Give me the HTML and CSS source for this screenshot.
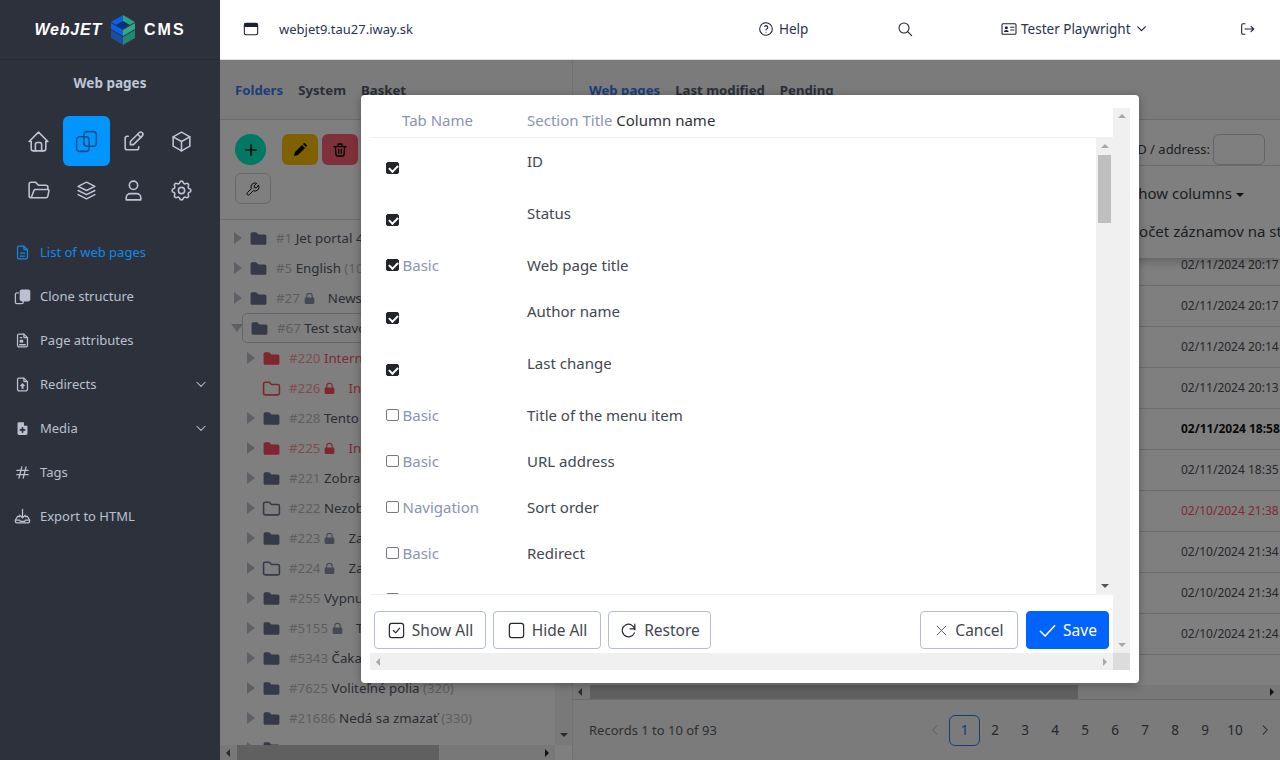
FILE: index.html
```html
<!DOCTYPE html>
<html lang="en">
<head>
    <meta charset="UTF-8">
    <title>WebJET CMS - Web pages</title>
    <link rel="stylesheet" href="styles.css">
</head>
<body>

<svg class="icon-defs" xmlns="http://www.w3.org/2000/svg">
    <symbol id="i-home" viewBox="0 0 24 24"><path d="M5 12H3l9-9 9 9h-2"/><path d="M5 12v7a2 2 0 0 0 2 2h10a2 2 0 0 0 2-2v-7"/><path d="M9 21v-6a2 2 0 0 1 2-2h2a2 2 0 0 1 2 2v6"/></symbol>
    <symbol id="i-copy" viewBox="0 0 24 24"><rect x="2.5" y="7.5" width="12" height="14" rx="3"/><rect x="9.5" y="2.5" width="12" height="14" rx="3"/></symbol>
    <symbol id="i-edit" viewBox="0 0 24 24"><path d="M7 7H6a2 2 0 0 0-2 2v9a2 2 0 0 0 2 2h9a2 2 0 0 0 2-2v-1"/><path d="M20.4 6.6a2.1 2.1 0 0 0-3-3L9 12v3h3z"/><path d="M16 5l3 3"/></symbol>
    <symbol id="i-box" viewBox="0 0 24 24"><path d="M12 3l8 4.5v9L12 21l-8-4.5v-9z"/><path d="M12 12l8-4.5M12 12v9M12 12L4 7.500"/></symbol>
    <symbol id="i-folder-open" viewBox="0 0 24 24"><path d="M5 19l2.800-7.400a1 1 0 0 1 .9-.6H21a1 1 0 0 1 1 1.200l-1 5.200a2 2 0 0 1-2 1.600H5a2 2 0 0 1-2-2V6a2 2 0 0 1 2-2h4l3 3h7a2 2 0 0 1 2 2v2"/></symbol>
    <symbol id="i-stack" viewBox="0 0 24 24"><path d="M12 4L4 8l8 4 8-4z"/><path d="M4 12l8 4 8-4"/><path d="M4 16l8 4 8-4"/></symbol>
    <symbol id="i-user" viewBox="0 0 24 24"><circle cx="12" cy="7" r="4"/><path d="M5 21v-2a4 4 0 0 1 4-4h6a4 4 0 0 1 4 4v2z"/></symbol>
    <symbol id="i-gear" viewBox="0 0 24 24"><path d="M10.325 4.317c.426-1.756 2.924-1.756 3.35 0a1.724 1.724 0 0 0 2.573 1.066c1.543-.94 3.31.826 2.37 2.37a1.724 1.724 0 0 0 1.065 2.572c1.756.426 1.756 2.924 0 3.350a1.724 1.724 0 0 0-1.066 2.573c.94 1.543-.826 3.310-2.370 2.370a1.724 1.724 0 0 0-2.572 1.065c-.426 1.756-2.924 1.756-3.350 0a1.724 1.724 0 0 0-2.573-1.066c-1.543.94-3.310-.826-2.370-2.370a1.724 1.724 0 0 0-1.065-2.572c-1.756-.426-1.756-2.924 0-3.350a1.724 1.724 0 0 0 1.066-2.573c-.94-1.543.826-3.310 2.370-2.370c1 .608 2.296.07 2.572-1.065z"/><circle cx="12" cy="12" r="3"/></symbol>
    <symbol id="i-file-text" viewBox="0 0 24 24"><path d="M14 3v4a1 1 0 0 0 1 1h4"/><path d="M17 21H7a2 2 0 0 1-2-2V5a2 2 0 0 1 2-2h7l5 5v11a2 2 0 0 1-2 2z"/><path d="M9 13h6M9 17h6"/></symbol>
    <symbol id="i-clone" viewBox="0 0 24 24"><rect class="solid" x="8" y="2" width="15" height="17" rx="3"/><path d="M6 7H4a2 2 0 0 0-2 2v11a2 2 0 0 0 2 2h7a2 2 0 0 0 2-2v-1"/></symbol>
    <symbol id="i-file-attr" viewBox="0 0 24 24"><path d="M14 3v4a1 1 0 0 0 1 1h4"/><path d="M17 21H7a2 2 0 0 1-2-2V5a2 2 0 0 1 2-2h7l5 5v11a2 2 0 0 1-2 2z"/><path class="solid" d="M8 11h5v4H8z"/><path d="M9 8h2M8 18h8"/></symbol>
    <symbol id="i-file-up" viewBox="0 0 24 24"><path d="M14 3v4a1 1 0 0 0 1 1h4"/><path d="M17 21H7a2 2 0 0 1-2-2V5a2 2 0 0 1 2-2h7l5 5v11a2 2 0 0 1-2 2z"/><path class="solid" d="M12 10l4 4h-2.500v4h-3v-4H8z"/></symbol>
    <symbol id="i-file-plus" viewBox="0 0 24 24"><path class="solid" d="M17 21H7a2 2 0 0 1-2-2V5a2 2 0 0 1 2-2h7v4a1 1 0 0 0 1 1h4v11a2 2 0 0 1-2 2z"/><path class="cut" d="M12 11v6M9 14h6"/></symbol>
    <symbol id="i-hash" viewBox="0 0 24 24"><path d="M4 9h16M4 15h16M11 4L7 20M17 4l-4 16"/></symbol>
    <symbol id="i-export" viewBox="0 0 24 24"><path d="M12 2v12M8 10l4 4 4-4"/><path d="M8 12H5l-3 5v2a2 2 0 0 0 2 2h16a2 2 0 0 0 2-2v-2l-3-5h-3"/><path d="M2 17h6l1 2h6l1-2h6"/></symbol>
    <symbol id="i-chevron" viewBox="0 0 24 24"><path d="M5 9l7 7 7-7"/></symbol>
    <symbol id="i-window" viewBox="0 0 24 24"><rect x="2" y="3.500" width="20" height="17" rx="2.500"/><path class="solid" d="M2 5a2 2 0 0 1 2-2h16a2 2 0 0 1 2 2v4H2z"/></symbol>
    <symbol id="i-help" viewBox="0 0 24 24"><circle cx="12" cy="12" r="9.500"/><path d="M12 17v.01M12 13.500a1.500 1.500 0 0 1 1-1.500 2.600 2.600 0 1 0-3-4"/></symbol>
    <symbol id="i-search" viewBox="0 0 24 24"><circle cx="10.500" cy="10.500" r="7.500"/><path d="M16 16l6 6"/></symbol>
    <symbol id="i-idcard" viewBox="0 0 24 24"><rect x="1.500" y="4" width="21" height="16" rx="1.500"/><circle class="solid" cx="8" cy="10" r="2.300"/><path class="solid" d="M4.500 16.500a3.500 3 0 0 1 7 0z"/><path d="M14.500 9.500h5M14.500 13.500h5"/></symbol>
    <symbol id="i-logout" viewBox="0 0 24 24"><path d="M9 4H6a2 2 0 0 0-2 2v12a2 2 0 0 0 2 2h3"/><path d="M9 12h13M18 8l4 4-4 4"/></symbol>
    <symbol id="i-plus" viewBox="0 0 24 24"><path d="M12 4v16M4 12h16"/></symbol>
    <symbol id="i-pencil" viewBox="0 0 24 24"><path class="solid" d="M3 21l1.500-6L15 4.500l4.500 4.500L9 19.500zM16.500 3l1-1a1.500 1.500 0 0 1 2 0l2.500 2.500a1.500 1.500 0 0 1 0 2l-1 1z"/></symbol>
    <symbol id="i-trash" viewBox="0 0 24 24"><path d="M3 7h18M10 11v6M14 11v6M5 7l1 12a2 2 0 0 0 2 2h8a2 2 0 0 0 2-2l1-12M9 7V4a1 1 0 0 1 1-1h4a1 1 0 0 1 1 1v3"/></symbol>
    <symbol id="i-tool" viewBox="0 0 24 24"><path d="M17 10h-3V7l3.500-3.500a6 6 0 0 0-8 8l-6 6a2 2 0 0 0 3 3l6-6a6 6 0 0 0 8-8z"/></symbol>
    <symbol id="i-folder" viewBox="0 0 24 24"><path class="solid" d="M2 6a2 2 0 0 1 2-2h5l3 3h8a2 2 0 0 1 2 2v9a2 2 0 0 1-2 2H4a2 2 0 0 1-2-2z"/></symbol>
    <symbol id="i-folder-line" viewBox="0 0 24 24"><path d="M2 6a2 2 0 0 1 2-2h5l3 3h8a2 2 0 0 1 2 2v9a2 2 0 0 1-2 2H4a2 2 0 0 1-2-2z"/></symbol>
    <symbol id="i-lock" viewBox="0 0 24 24"><path d="M7 11V7.500a5 5 0 0 1 10 0V11"/><rect class="solid" x="3" y="10" width="18" height="12" rx="2.500"/></symbol>
    <symbol id="i-check-square" viewBox="0 0 24 24"><rect x="3" y="3" width="18" height="18" rx="3"/><path d="M8 12l3 3 5-6"/></symbol>
    <symbol id="i-square" viewBox="0 0 24 24"><rect x="3" y="3" width="18" height="18" rx="3"/></symbol>
    <symbol id="i-restore" viewBox="0 0 24 24"><path d="M20 11a8 8 0 1 0-.500 4"/><path d="M20 4v6h-6"/></symbol>
    <symbol id="i-x" viewBox="0 0 24 24"><path d="M5 5l14 14M19 5L5 19"/></symbol>
    <symbol id="i-check" viewBox="0 0 24 24"><path d="M3 13l6 6L21 6"/></symbol>
    <symbol id="i-left" viewBox="0 0 24 24"><path d="M15 5l-7 7 7 7"/></symbol>
    <symbol id="i-right" viewBox="0 0 24 24"><path d="M9 5l7 7-7 7"/></symbol>
</svg>

<div class="app">
    <aside class="sidebar">
        <div class="logo">
            <span class="logo-web">WebJET</span>
            <svg class="logo-cube" viewBox="0 0 26 30" xmlns="http://www.w3.org/2000/svg">
                <polygon points="13,0 25,7 13,14" fill="#2aa37f"/>
                <polygon points="13,0 1,7 13,14" fill="#0b5fe6"/>
                <polygon points="13,6 20,10 13,14 6,10" fill="#0d2f73"/>
                <polygon points="1,8 13,15 13,21 1,14" fill="#0b5fe6"/>
                <polygon points="25,8 13,15 13,21 25,14" fill="#2fa98a"/>
                <polygon points="1,15 13,22 13,30 1,23" fill="#1a4f9c"/>
                <polygon points="25,15 13,22 13,30 25,23" fill="#27866f"/>
            </svg>
            <span class="logo-cms">CMS</span>
        </div>
        <div class="side-title">Web pages</div>
        <div class="side-grid">
            <a class="side-tile"><svg class="ico"><use href="#i-home"/></svg></a>
            <a class="side-tile active"><svg class="ico"><use href="#i-copy"/></svg></a>
            <a class="side-tile"><svg class="ico"><use href="#i-edit"/></svg></a>
            <a class="side-tile"><svg class="ico"><use href="#i-box"/></svg></a>
            <a class="side-tile"><svg class="ico"><use href="#i-folder-open"/></svg></a>
            <a class="side-tile"><svg class="ico"><use href="#i-stack"/></svg></a>
            <a class="side-tile"><svg class="ico"><use href="#i-user"/></svg></a>
            <a class="side-tile"><svg class="ico"><use href="#i-gear"/></svg></a>
        </div>
        <nav class="side-nav">
            <a class="nav-item active"><svg class="ico"><use href="#i-file-text"/></svg>List of web pages</a>
            <a class="nav-item"><svg class="ico"><use href="#i-clone"/></svg>Clone structure</a>
            <a class="nav-item"><svg class="ico"><use href="#i-file-attr"/></svg>Page attributes</a>
            <a class="nav-item"><svg class="ico"><use href="#i-file-up"/></svg>Redirects<svg class="ico nav-caret"><use href="#i-chevron"/></svg></a>
            <a class="nav-item"><svg class="ico"><use href="#i-file-plus"/></svg>Media<svg class="ico nav-caret"><use href="#i-chevron"/></svg></a>
            <a class="nav-item"><svg class="ico"><use href="#i-hash"/></svg>Tags</a>
            <a class="nav-item"><svg class="ico"><use href="#i-export"/></svg>Export to HTML</a>
        </nav>
    </aside>

    <div class="main">
        <header class="topbar">
            <svg class="ico top-window"><use href="#i-window"/></svg>
            <span class="top-domain">webjet9.tau27.iway.sk</span>
            <span class="top-help"><svg class="ico"><use href="#i-help"/></svg>Help</span>
            <svg class="ico top-search"><use href="#i-search"/></svg>
            <span class="top-user"><svg class="ico"><use href="#i-idcard"/></svg>Tester Playwright<svg class="ico top-caret"><use href="#i-chevron"/></svg></span>
            <svg class="ico top-logout"><use href="#i-logout"/></svg>
        </header>

        <div class="workspace">
            <section class="left-panel">
                <div class="tabs">
                    <a class="tab active">Folders</a>
                    <a class="tab">System</a>
                    <a class="tab">Basket</a>
                </div>
                <div class="tree-toolbar">
                    <button class="btn-round"><svg class="ico"><use href="#i-plus"/></svg></button>
                    <button class="btn-tool btn-yellow"><svg class="ico"><use href="#i-pencil"/></svg></button>
                    <button class="btn-tool btn-red"><svg class="ico"><use href="#i-trash"/></svg></button>
                    <button class="btn-tool btn-plain"><svg class="ico"><use href="#i-tool"/></svg></button>
                </div>
                <div class="tree-wrap">
                    <ul class="tree">
                        <li class="node"><i class="arrow"></i><svg class="ico fld"><use href="#i-folder"/></svg><span class="num">#1</span> Jet portal 4 <span class="num">(0)</span></li>
                        <li class="node"><i class="arrow"></i><svg class="ico fld"><use href="#i-folder"/></svg><span class="num">#5</span> English <span class="num">(10)</span></li>
                        <li class="node"><i class="arrow"></i><svg class="ico fld"><use href="#i-folder"/></svg><span class="num">#27</span><svg class="ico lock"><use href="#i-lock"/></svg>Newsletter</li>
                        <li class="node open selected"><i class="arrow"></i><svg class="ico fld"><use href="#i-folder"/></svg><span class="num">#67</span> Test stavov</li>
                        <li class="node sub red"><i class="arrow"></i><svg class="ico fld"><use href="#i-folder"/></svg><span class="num">#220</span> Interny</li>
                        <li class="node sub red"><i class="arrow none"></i><svg class="ico fld"><use href="#i-folder-line"/></svg><span class="num">#226</span><svg class="ico lock"><use href="#i-lock"/></svg>Interny</li>
                        <li class="node sub"><i class="arrow"></i><svg class="ico fld"><use href="#i-folder"/></svg><span class="num">#228</span> Tento</li>
                        <li class="node sub red"><i class="arrow"></i><svg class="ico fld"><use href="#i-folder"/></svg><span class="num">#225</span><svg class="ico lock"><use href="#i-lock"/></svg>Interny</li>
                        <li class="node sub"><i class="arrow"></i><svg class="ico fld"><use href="#i-folder"/></svg><span class="num">#221</span> Zobrazit</li>
                        <li class="node sub"><i class="arrow"></i><svg class="ico fld"><use href="#i-folder-line"/></svg><span class="num">#222</span> Nezobrazit</li>
                        <li class="node sub"><i class="arrow"></i><svg class="ico fld"><use href="#i-folder"/></svg><span class="num">#223</span><svg class="ico lock"><use href="#i-lock"/></svg>Zaheslovany</li>
                        <li class="node sub"><i class="arrow"></i><svg class="ico fld"><use href="#i-folder-line"/></svg><span class="num">#224</span><svg class="ico lock"><use href="#i-lock"/></svg>Zaheslovany</li>
                        <li class="node sub"><i class="arrow"></i><svg class="ico fld"><use href="#i-folder"/></svg><span class="num">#255</span> Vypnute</li>
                        <li class="node sub"><i class="arrow"></i><svg class="ico fld"><use href="#i-folder"/></svg><span class="num">#5155</span><svg class="ico lock"><use href="#i-lock"/></svg>Test</li>
                        <li class="node sub"><i class="arrow"></i><svg class="ico fld"><use href="#i-folder"/></svg><span class="num">#5343</span> Čaka</li>
                        <li class="node sub"><i class="arrow"></i><svg class="ico fld"><use href="#i-folder"/></svg><span class="num">#7625</span> Voliteľné polia <span class="num">(320)</span></li>
                        <li class="node sub"><i class="arrow"></i><svg class="ico fld"><use href="#i-folder"/></svg><span class="num">#21686</span> Nedá sa zmazať <span class="num">(330)</span></li>
                        <li class="node sub"><i class="arrow"></i><svg class="ico fld"><use href="#i-folder"/></svg></li>
                    </ul>
                    <div class="vbar tree-vbar"><i class="sb-up dark"></i><i class="sb-down dark"></i></div>
                </div>
                <div class="hbar tree-hbar"><i class="sb-left dark"></i><span class="tree-thumb"></span><i class="sb-right dark"></i></div>
            </section>

            <section class="right-panel">
                <div class="tabs right-tabs">
                    <a class="tab active">Web pages</a>
                    <a class="tab">Last modified</a>
                    <a class="tab">Pending</a>
                </div>
                <div class="table-toolbar">
                    <label class="id-label">ID / address:</label>
                    <input class="id-input" type="text">
                </div>
                <div class="table-area">
                    <div class="settings-menu">
                        <div class="menu-line">Show columns <i class="menu-caret"></i></div>
                        <div class="menu-line">Počet záznamov na stranu</div>
                    </div>
                    <div class="row">02/11/2024 20:17</div>
                    <div class="row">02/11/2024 20:17</div>
                    <div class="row">02/11/2024 20:14</div>
                    <div class="row">02/11/2024 20:13</div>
                    <div class="row bold">02/11/2024 18:58</div>
                    <div class="row">02/11/2024 18:35</div>
                    <div class="row red">02/10/2024 21:38</div>
                    <div class="row">02/10/2024 21:34</div>
                    <div class="row">02/10/2024 21:34</div>
                    <div class="row">02/10/2024 21:24</div>
                </div>
                <div class="hbar table-hbar"><i class="sb-left dark"></i><span class="table-thumb"></span><i class="sb-right dark"></i></div>
                <div class="table-footer">
                    <span class="records">Records 1 to 10 of 93</span>
                    <div class="pager">
                        <a class="page off"><svg class="ico"><use href="#i-left"/></svg></a>
                        <a class="page current">1</a>
                        <a class="page">2</a>
                        <a class="page">3</a>
                        <a class="page">4</a>
                        <a class="page">5</a>
                        <a class="page">6</a>
                        <a class="page">7</a>
                        <a class="page">8</a>
                        <a class="page">9</a>
                        <a class="page">10</a>
                        <a class="page"><svg class="ico"><use href="#i-right"/></svg></a>
                    </div>
                </div>
            </section>

            <!-- modal backdrop covers only the workspace, header and sidebar stay bright -->
            <div class="backdrop">
                <div class="modal">
                    <div class="modal-frame">
                        <div class="modal-content">
                            <div class="col-head">
                                <span class="head-tab">Tab Name</span>
                                <span class="head-name"><span class="head-section">Section Title</span> Column name</span>
                            </div>
                            <div class="col-body">
                                <div class="col-list">
                                    <div class="col-row no-tab"><div class="col-tab"><span class="cb on"></span></div><div class="col-name">ID</div></div>
                                    <div class="col-row no-tab"><div class="col-tab"><span class="cb on"></span></div><div class="col-name">Status</div></div>
                                    <div class="col-row"><div class="col-tab"><span class="cb on"></span>Basic</div><div class="col-name">Web page title</div></div>
                                    <div class="col-row no-tab"><div class="col-tab"><span class="cb on"></span></div><div class="col-name">Author name</div></div>
                                    <div class="col-row no-tab"><div class="col-tab"><span class="cb on"></span></div><div class="col-name">Last change</div></div>
                                    <div class="col-row"><div class="col-tab"><span class="cb"></span>Basic</div><div class="col-name">Title of the menu item</div></div>
                                    <div class="col-row"><div class="col-tab"><span class="cb"></span>Basic</div><div class="col-name">URL address</div></div>
                                    <div class="col-row"><div class="col-tab"><span class="cb"></span>Navigation</div><div class="col-name">Sort order</div></div>
                                    <div class="col-row"><div class="col-tab"><span class="cb"></span>Basic</div><div class="col-name">Redirect</div></div>
                                    <div class="col-row"><div class="col-tab"><span class="cb"></span>Basic</div><div class="col-name">Do not search in the folders</div></div>
                                </div>
                                <div class="vbar inner-vbar"><i class="sb-up"></i><span class="inner-thumb"></span><i class="sb-down dark"></i></div>
                            </div>
                            <div class="col-footer">
                                <button class="btn btn-show"><svg class="ico"><use href="#i-check-square"/></svg>Show All</button>
                                <button class="btn btn-hide"><svg class="ico"><use href="#i-square"/></svg>Hide All</button>
                                <button class="btn btn-restore"><svg class="ico"><use href="#i-restore"/></svg>Restore</button>
                                <span class="footer-gap"></span>
                                <button class="btn btn-cancel"><svg class="ico"><use href="#i-x"/></svg>Cancel</button>
                                <button class="btn btn-save"><svg class="ico"><use href="#i-check"/></svg>Save</button>
                            </div>
                        </div>
                        <div class="vbar outer-vbar"><i class="sb-up"></i><i class="sb-down"></i></div>
                        <div class="hbar outer-hbar"><i class="sb-left"></i><i class="sb-right"></i></div>
                        <div class="sb-corner"></div>
                    </div>
                </div>
            </div>
        </div>
    </div>
</div>

</body>
</html>
```

FILE: styles.css
```css
* {
    box-sizing: border-box;
}
html, body {
    height: 100%;
}
body {
    margin: 0;
    font-family: "Noto Sans", sans-serif;
    font-size: 14px;
    color: #3a3f47;
    background-color: #fff;
    overflow: hidden;
}
ul {
    margin: 0;
    padding: 0;
    list-style: none;
}
button {
    font-family: inherit;
    cursor: pointer;
}
.icon-defs {
    position: absolute;
    width: 0;
    height: 0;
}
.ico {
    width: 16px;
    height: 16px;
    flex: none;
    fill: none;
    stroke: currentColor;
    stroke-width: 2;
    stroke-linecap: round;
    stroke-linejoin: round;
}
.solid {
    fill: currentColor;
    stroke: none;
}
.cut {
    stroke: #2d313c;
    stroke-width: 2.500;
}
.app {
    display: flex;
    width: 1280px;
    height: 760px;
}

/* sidebar */
.sidebar {
    width: 220px;
    flex: none;
    background-color: #2d313c;
    color: #b9c1d0;
}
.logo {
    height: 60px;
    display: flex;
    align-items: center;
    justify-content: center;
    gap: 8px;
    border-bottom: 1px solid #272a34;
    color: #fff;
    font-family: "Liberation Sans", sans-serif;
    font-weight: bold;
}
.logo-web {
    font-size: 16px;
    font-style: italic;
    letter-spacing: 0.8px;
}
.logo-cms {
    font-size: 16px;
    letter-spacing: 2px;
}
.logo-cube {
    width: 26px;
    height: 30px;
}
.side-title {
    margin-top: 13px;
    text-align: center;
    font-weight: bold;
    font-size: 13.500px;
    line-height: 20px;
    color: #bcc7da;
}
.side-grid {
    display: grid;
    grid-template-columns: repeat(4, 47.500px);
    grid-template-rows: 50px 48px;
    margin: 23px 0 0 15px;
}
.side-tile {
    display: flex;
    align-items: center;
    justify-content: center;
    border-radius: 6px;
    color: #bcc5d6;
}
.side-tile .ico {
    width: 25px;
    height: 25px;
    stroke-width: 1.500;
}
.side-tile.active {
    background-color: #0095ff;
    color: #12508c;
}
.side-nav {
    margin-top: 16px;
}
.nav-item {
    display: flex;
    align-items: center;
    height: 44px;
    padding: 0 12px 0 14px;
    gap: 9px;
    font-size: 13px;
}
.nav-item.active {
    color: #0d8ae8;
}
.nav-item .ico {
    width: 17px;
    height: 17px;
    stroke-width: 1.800;
}
.nav-item .nav-caret {
    margin-left: auto;
    width: 14px;
    height: 14px;
}

/* top bar */
.main {
    flex: 1;
    min-width: 0;
    display: flex;
    flex-direction: column;
}
.topbar {
    height: 60px;
    flex: none;
    display: flex;
    align-items: center;
    padding-bottom: 2px;
    background-color: #fff;
    color: #2a3350;
    font-size: 13.500px;
    border-bottom: 1px solid #ddd;
}
.topbar .ico {
    color: #1c2233;
    stroke-width: 1.600;
}
.top-window {
    margin-left: 23px;
}
.top-domain {
    margin-left: 20px;
    width: 479px;
    font-size: 13px;
}
.top-help {
    display: flex;
    align-items: center;
    gap: 5px;
    width: 139px;
}
.top-search {
    margin-right: 88px;
}
.top-user {
    display: flex;
    align-items: center;
    gap: 4px;
    width: 238px;
}
.topbar .top-caret {
    width: 13px;
    height: 13px;
    stroke-width: 2.200;
}

/* behind the modal */
.workspace {
    flex: 1;
    min-height: 0;
    display: flex;
    position: relative;
}
.left-panel {
    width: 353px;
    flex: none;
    display: flex;
    flex-direction: column;
    border-right: 1px solid #e2e2e2;
}
.right-panel {
    flex: 1;
    min-width: 0;
    display: flex;
    flex-direction: column;
}
.tabs {
    height: 60px;
    flex: none;
    display: flex;
    align-items: center;
    gap: 15px;
    padding: 0 15px;
    background-color: #f6f6f6;
    border-bottom: 1px solid #d8d8d8;
    font-weight: bold;
    font-size: 13.200px;
    color: #555c72;
}
.right-tabs {
    padding-left: 16px;
}
.tab.active {
    color: #3a78f5;
}
.tree-toolbar {
    height: 100px;
    flex: none;
    display: flex;
    flex-wrap: wrap;
    align-content: flex-start;
    padding: 14px 0 0 15px;
    border-bottom: 1px solid #d8d8d8;
    background-color: #fff;
}
.tree-toolbar button {
    border: 0;
    padding: 0;
    display: flex;
    align-items: center;
    justify-content: center;
    color: #000;
    height: 31px;
}
.btn-round {
    width: 31px;
    border-radius: 50%;
    background-color: #00f0c8;
    margin-right: 16px;
}
.btn-tool {
    width: 36px;
    border-radius: 6px;
    margin-right: 4px;
}
.btn-yellow {
    background-color: #ffc107;
}
.btn-red {
    background-color: #ff6070;
    margin-right: 200px;
}
.tree-toolbar .btn-plain {
    margin-top: 8px;
    border: 1px solid #ccd0da;
    background-color: #fff;
}
.btn-plain .ico {
    stroke-width: 1.400;
}
.tree-wrap {
    flex: 1;
    min-height: 0;
    display: flex;
}
.tree {
    flex: 1;
    min-width: 0;
    overflow: hidden;
    padding: 3px 0 0 14px;
}
.node {
    height: 30px;
    display: flex;
    align-items: center;
    white-space: pre;
    font-size: 13.300px;
    color: #555a6a;
}
.node .num {
    color: #bdbdbd;
}
.node .fld {
    color: #6a7390;
    margin-right: 8px;
    width: 19px;
    height: 19px;
}
.node .lock {
    color: #8a92a8;
    width: 13px;
    height: 13px;
    margin: 0 12px 0 3px;
}
.arrow {
    width: 0;
    height: 0;
    margin-right: 7px;
    border-style: solid;
    border-width: 6px 0 6px 8px;
    border-color: transparent transparent transparent #bcc1cc;
}
.arrow.none {
    border-color: transparent;
}
.node.sub {
    padding-left: 13px;
}
.node.red {
    color: #ff5566;
}
.node.red .num {
    color: #ff9aa2;
}
.node.red .fld, .node.red .lock {
    color: #ff4d5c;
}
.node.open .arrow {
    margin-left: -3px;
    margin-right: 7px;
    border-width: 8px 6px 0 6px;
    border-color: #bcc1cc transparent transparent transparent;
}
.node.selected {
    position: relative;
}
.node.selected::before {
    content: "";
    position: absolute;
    left: 8px;
    right: -400px;
    top: 0;
    bottom: 0;
    border: 1px solid #c6cbda;
    border-radius: 5px;
}

/* scrollbars are drawn, native ones differ */
.vbar {
    width: 17px;
    flex: none;
    display: flex;
    flex-direction: column;
    align-items: center;
    padding: 6px 0;
    background-color: #f0f0f0;
}
.hbar {
    height: 15px;
    flex: none;
    display: flex;
    align-items: center;
    padding: 0 6px;
    background-color: #f0f0f0;
}
.sb-up, .sb-down, .sb-left, .sb-right {
    width: 0;
    height: 0;
    flex: none;
    border-style: solid;
    border-color: transparent;
}
.sb-up {
    border-width: 0 4px 4px 4px;
    border-bottom-color: #a8a8a8;
}
.sb-down {
    margin-top: auto;
    border-width: 4px 4px 0 4px;
    border-top-color: #a8a8a8;
}
.sb-left {
    border-width: 4px 4px 4px 0;
    border-right-color: #a8a8a8;
}
.sb-right {
    margin-left: auto;
    border-width: 4px 0 4px 4px;
    border-left-color: #a8a8a8;
}
.sb-up.dark {
    border-bottom-color: #555;
}
.sb-down.dark {
    border-top-color: #555;
}
.sb-left.dark {
    border-right-color: #555;
}
.sb-right.dark {
    border-left-color: #222;
}
.tree-vbar {
    background-color: #f2f2f2;
    padding-bottom: 8px;
}
.tree-hbar {
    height: 15px;
    padding-right: 6px;
    margin-right: 17px;
}
.tree-thumb {
    width: 202px;
    height: 100%;
    margin-left: 7px;
    background-color: #c1c1c1;
}

/* right side */
.table-toolbar {
    height: 46px;
    flex: none;
    display: flex;
    align-items: flex-end;
    justify-content: flex-end;
    gap: 3px;
    padding-right: 15px;
    border-bottom: 1px solid #d8d8d8;
    font-size: 13px;
}
.id-label {
    line-height: 31px;
}
.id-input {
    width: 52px;
    height: 31px;
    border: 1px solid #c6cbda;
    border-radius: 6px;
    background-color: #fff;
}
.table-area {
    flex: 1;
    min-height: 0;
    position: relative;
    padding-top: 79px;
    overflow: hidden;
}
.settings-menu {
    position: absolute;
    top: 0;
    left: 0;
    right: 0;
    height: 92px;
    padding: 15px 0 0 557px;
    background-color: #fff;
    box-shadow: 0 3px 10px rgba(0, 0, 0, 0.25);
    font-size: 15px;
    white-space: nowrap;
    overflow: hidden;
}
.menu-line {
    height: 38px;
    line-height: 24px;
}
.menu-caret {
    display: inline-block;
    vertical-align: middle;
    border-style: solid;
    border-width: 4px 4px 0 4px;
    border-color: #222 transparent transparent transparent;
}
.row {
    height: 41px;
    padding: 11px 0 0 608px;
    border-bottom: 1px solid #d8d8d8;
    font-size: 12px;
    line-height: 18px;
    white-space: nowrap;
    color: #4c4f58;
}
.row.bold {
    font-weight: bold;
    color: #111;
}
.row.red {
    color: #ff5566;
}
.table-hbar {
    height: 15px;
    border-bottom: 1px solid #d8d8d8;
    padding-left: 5px;
}
.table-thumb {
    width: 488px;
    height: 100%;
    margin-left: 8px;
    background-color: #c1c1c1;
}
.table-footer {
    height: 60px;
    flex: none;
    display: flex;
    align-items: center;
    justify-content: space-between;
    padding-left: 16px;
    background-color: #f6f6f6;
    font-size: 13px;
    color: #5c5f68;
}
.pager {
    display: flex;
    align-items: center;
}
.page {
    width: 30px;
    height: 31px;
    display: flex;
    align-items: center;
    justify-content: center;
    color: #4e5159;
    font-size: 13.500px;
}
.page .ico {
    width: 14px;
    height: 14px;
    stroke-width: 1.800;
}
.page.off {
    color: #c6c9d2;
}
.page.current {
    width: 31px;
    margin-left: -1px;
    border: 1px solid #2a7cf0;
    border-radius: 6px;
    color: #2a7cf0;
}

/* modal */
.backdrop {
    position: absolute;
    top: 0;
    left: 0;
    right: 0;
    bottom: 0;
    display: flex;
    justify-content: center;
    padding-top: 35px;
    background-color: rgba(0, 0, 0, 0.5);
}
.modal {
    width: 778px;
    height: 588px;
    padding: 13px 9px;
    border-radius: 4px;
    background-color: #fff;
    box-shadow: 0 2px 10px rgba(0, 0, 0, 0.3);
}
.modal-frame {
    display: grid;
    grid-template-columns: 743px 17px;
    grid-template-rows: 545px 17px;
    height: 100%;
}
.modal-content {
    display: flex;
    flex-direction: column;
    min-height: 0;
}
.col-head {
    height: 30px;
    flex: none;
    display: flex;
    align-items: flex-start;
    padding-top: 1px;
    line-height: 22px;
    border-bottom: 1px solid #f0f0f0;
    font-size: 15px;
    color: #2f3338;
}
.head-tab {
    width: 157px;
    padding-left: 32px;
    color: #8a93b3;
}
.head-section {
    color: #8a93b3;
}
.col-body {
    flex: 1;
    min-height: 0;
    display: flex;
}
.col-list {
    flex: 1;
    min-width: 0;
    overflow: hidden;
}
.col-row {
    display: flex;
    height: 46px;
    font-size: 15px;
    line-height: 22px;
}
.col-row.no-tab {
    height: 52px;
}
.col-tab {
    width: 157px;
    flex: none;
    display: flex;
    align-items: center;
    align-self: flex-start;
    height: 22px;
    margin-top: 12px;
    padding-left: 16px;
    color: #8a93b3;
}
.no-tab .col-tab {
    margin-top: 19px;
}
.col-name {
    margin-top: 12px;
    color: #43474f;
}
.cb {
    width: 12.500px;
    height: 12.500px;
    margin-right: 4px;
    flex: none;
    position: relative;
    border: 1px solid #75787f;
    border-radius: 2px;
}
.cb.on {
    background-color: #212529;
    border-color: #212529;
}
.cb.on::after {
    content: "";
    position: absolute;
    left: 2px;
    top: 2px;
    width: 6.500px;
    height: 3.800px;
    border-left: 2px solid #fff;
    border-bottom: 2px solid #fff;
    transform: rotate(-45deg);
}
.inner-vbar {
    background-color: #f0f0f0;
}
.inner-thumb {
    width: 13px;
    height: 68px;
    margin-top: 7px;
    background-color: #bfbfbf;
}
.col-footer {
    height: 59px;
    flex: none;
    display: flex;
    gap: 7px;
    padding: 16px 4px 0 4px;
    border-top: 1px solid #f0f0f0;
}
.footer-gap {
    flex: 1;
}
.btn {
    height: 38px;
    padding: 0;
    display: flex;
    align-items: center;
    justify-content: center;
    gap: 6px;
    border: 1px solid #b5bdd0;
    border-radius: 4px;
    background-color: #fff;
    color: #43474f;
    font-size: 15.500px;
}
.btn .ico {
    width: 19px;
    height: 19px;
    color: #24272d;
    stroke-width: 1.500;
}
.btn-show {
    width: 112px;
}
.btn-hide {
    width: 108px;
}
.btn-restore {
    width: 103px;
}
.btn-cancel {
    width: 98px;
}
.btn-cancel .ico {
    color: #555;
    width: 15px;
    height: 15px;
}
.btn-save {
    width: 83px;
    margin-left: 1px;
    border-color: #0063fb;
    background-color: #0063fb;
    color: #fff;
}
.btn-save .ico {
    color: #fff;
    stroke-width: 2;
}
.outer-vbar {
    grid-column: 2;
    grid-row: 1;
}
.outer-hbar {
    grid-column: 1;
    grid-row: 2;
    height: 17px;
}
.sb-corner {
    grid-column: 2;
    grid-row: 2;
    background-color: #dcdcdc;
}
```
